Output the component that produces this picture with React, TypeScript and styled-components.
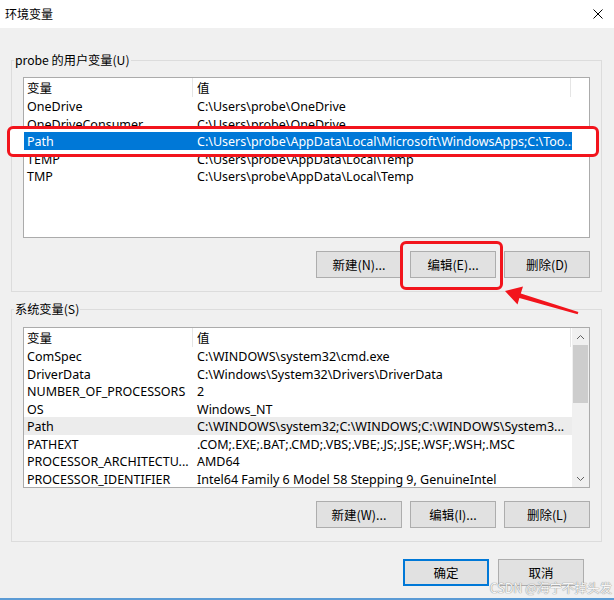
import React from "react";
import styled, { createGlobalStyle } from "styled-components";

const UI_FONT = `"Noto Sans", "Noto Sans CJK SC", sans-serif`;
const CJK_FONT = `"Noto Sans CJK SC", "Noto Sans", sans-serif`;

const GlobalStyle = createGlobalStyle`
  html, body { margin: 0; padding: 0; background: #f0f0f0; }
  body { width: 614px; height: 600px; overflow: hidden; font-family: ${UI_FONT}; }
`;

const Window = styled.div`
  position: relative;
  width: 614px;
  height: 600px;
  box-sizing: border-box;
  background: #f0f0f0;
  border-bottom: 2px solid #5b9bd5;
  display: flex;
  flex-direction: column;
  color: #000;
`;

const TitleBar = styled.div`
  height: 28px;
  flex: none;
  background: #ffffff;
  display: flex;
  align-items: center;
  justify-content: space-between;
  padding: 0 11px 0 5px;
`;

const Title = styled.span`
  font-family: ${CJK_FONT};
  font-size: 12px;
  line-height: 16px;
`;

const Main = styled.div`
  display: flex;
  flex-direction: column;
  padding: 24px 12px 0 11px;
`;

const Group = styled.fieldset<{ $gap?: number }>`
  margin: ${(p) => p.$gap ?? 0}px 0 0 0;
  padding: 0;
  min-width: 0;
  border: 1px solid #dcdcdc;
`;

const Legend = styled.legend`
  margin-left: 2px;
  padding: 0 1px;
  font-family: ${CJK_FONT};
  font-size: 12.2px;
  line-height: 16px;
`;

const GroupBody = styled.div<{ $top: number }>`
  display: flex;
  flex-direction: column;
  gap: 13px;
  padding: ${(p) => p.$top}px 11px 13px 11px;
`;

const ListView = styled.div`
  height: 161px;
  box-sizing: border-box;
  border: 1px solid #ababab;
  background: #ffffff;
  display: flex;
  overflow: hidden;
`;

const Table = styled.div`
  width: 548px;
  display: flex;
  flex-direction: column;
`;

const HeaderRow = styled.div`
  display: grid;
  grid-template-columns: 169px 378px;
  height: 19px;
  flex: none;
`;

const HeaderCell = styled.div<{ $first?: boolean }>`
  border-right: 1px solid #e5e5e5;
  padding: 1px 0 0 ${(p) => (p.$first ? 3 : 4)}px;
  font-family: ${CJK_FONT};
  font-size: 12.5px;
  line-height: 18px;
`;

type RowState = "normal" | "selected" | "inactive";

const Row = styled.div<{ $state: RowState }>`
  display: grid;
  grid-template-columns: 169px 1fr;
  height: 17.5px;
  flex: none;
  font-size: 12.5px;
  white-space: nowrap;
  position: ${(p) => (p.$state === "selected" ? "relative" : "static")};
  z-index: ${(p) => (p.$state === "selected" ? 2 : "auto")};
  background: ${(p) =>
    p.$state === "selected" ? "#0078d7" : p.$state === "inactive" ? "#ececec" : "transparent"};
  color: ${(p) => (p.$state === "selected" ? "#ffffff" : "#000000")};
`;

const Cell = styled.div<{ $first?: boolean }>`
  padding: 1px 0 0 ${(p) => (p.$first ? 3 : 4)}px;
  line-height: 17px;
  height: 17.5px;
  box-sizing: border-box;
`;

const ScrollBar = styled.div`
  width: 17px;
  flex: none;
  background: #f0f0f0;
  display: flex;
  flex-direction: column;
`;

const ScrollArrow = styled.div`
  height: 17px;
  flex: none;
  display: flex;
  align-items: center;
  justify-content: center;
`;

const Thumb = styled.div`
  height: 58px;
  width: 15px;
  margin-left: 1px;
  background: #cdcdcd;
  flex: none;
`;

const Track = styled.div`
  flex: 1;
`;

const ButtonRow = styled.div<{ $gap: number; $right?: number }>`
  display: flex;
  justify-content: flex-end;
  gap: ${(p) => p.$gap}px;
  padding-right: ${(p) => p.$right ?? 0}px;
`;

const Button = styled.button<{ $default?: boolean }>`
  width: 86px;
  height: 27px;
  margin: 0;
  padding: 0;
  box-sizing: border-box;
  background: #e1e1e1;
  border: 1px solid ${(p) => (p.$default ? "#0078d7" : "#adadad")};
  box-shadow: ${(p) => (p.$default ? "inset 0 0 0 1px #0078d7" : "none")};
  font-family: ${CJK_FONT};
  font-size: 12.5px;
  color: #000;
`;

const Footer = styled(ButtonRow)`
  margin-top: 17px;
`;

const HighlightBox = styled.div`
  position: absolute;
  left: 7px;
  top: 126px;
  width: 592px;
  height: 31px;
  box-sizing: border-box;
  border: 3.5px solid #f2141c;
  border-radius: 6px;
  background: #ffffff;
  z-index: 1;
`;

const ButtonMark = styled.div`
  position: absolute;
  left: 400px;
  top: 241px;
  width: 103px;
  height: 49px;
  box-sizing: border-box;
  border: 3px solid #f2141c;
  border-radius: 6px;
  z-index: 3;
`;

const ArrowSvg = styled.svg`
  position: absolute;
  left: 0;
  top: 0;
  z-index: 3;
  pointer-events: none;
`;

const Watermark = styled.div`
  position: absolute;
  right: 2px;
  bottom: 2px;
  font-family: ${CJK_FONT};
  font-size: 12.5px;
  line-height: 16px;
  color: #f6f6f6;
  text-shadow: 0 0 1px #8a8a8a, 0 0 1px #8a8a8a;
  z-index: 3;
`;

const Chevron = ({ up }: { up?: boolean }) => (
  <svg width="9" height="6" viewBox="0 0 9 6">
    <path
      d={up ? "M1 5 L4.5 1.5 L8 5" : "M1 1 L4.5 4.5 L8 1"}
      fill="none"
      stroke="#606060"
      strokeWidth="1"
    />
  </svg>
);

type Item = { name: string; value: string; state?: RowState };

const userVars: Item[] = [
  { name: "OneDrive", value: "C:\\Users\\probe\\OneDrive" },
  { name: "OneDriveConsumer", value: "C:\\Users\\probe\\OneDrive" },
  {
    name: "Path",
    value: "C:\\Users\\probe\\AppData\\Local\\Microsoft\\WindowsApps;C:\\Too...",
    state: "selected",
  },
  { name: "TEMP", value: "C:\\Users\\probe\\AppData\\Local\\Temp" },
  { name: "TMP", value: "C:\\Users\\probe\\AppData\\Local\\Temp" },
];

const sysVars: Item[] = [
  { name: "ComSpec", value: "C:\\WINDOWS\\system32\\cmd.exe" },
  { name: "DriverData", value: "C:\\Windows\\System32\\Drivers\\DriverData" },
  { name: "NUMBER_OF_PROCESSORS", value: "2" },
  { name: "OS", value: "Windows_NT" },
  {
    name: "Path",
    value: "C:\\WINDOWS\\system32;C:\\WINDOWS;C:\\WINDOWS\\System3...",
    state: "inactive",
  },
  { name: "PATHEXT", value: ".COM;.EXE;.BAT;.CMD;.VBS;.VBE;.JS;.JSE;.WSF;.WSH;.MSC" },
  { name: "PROCESSOR_ARCHITECTU...", value: "AMD64" },
  { name: "PROCESSOR_IDENTIFIER", value: "Intel64 Family 6 Model 58 Stepping 9, GenuineIntel" },
];

const VarList = ({ items, scroll }: { items: Item[]; scroll?: boolean }) => (
  <ListView>
    <Table>
      <HeaderRow>
        <HeaderCell $first>变量</HeaderCell>
        <HeaderCell>值</HeaderCell>
      </HeaderRow>
      {items.map((it) => (
        <Row key={it.name + it.value} $state={it.state ?? "normal"}>
          <Cell $first>{it.name}</Cell>
          <Cell>{it.value}</Cell>
        </Row>
      ))}
    </Table>
    {scroll && (
      <ScrollBar>
        <ScrollArrow>
          <Chevron up />
        </ScrollArrow>
        <Thumb />
        <Track />
        <ScrollArrow>
          <Chevron />
        </ScrollArrow>
      </ScrollBar>
    )}
  </ListView>
);

export default function App() {
  return (
    <>
      <GlobalStyle />
      <Window>
        <TitleBar>
          <Title>环境变量</Title>
          <svg width="10" height="10" viewBox="0 0 10 10">
            <path d="M0.5 0.5 L9.5 9.5 M9.5 0.5 L0.5 9.5" stroke="#000" strokeWidth="1" />
          </svg>
        </TitleBar>
        <Main>
          <Group>
            <Legend>probe 的用户变量(U)</Legend>
            <GroupBody $top={9}>
              <VarList items={userVars} />
              <ButtonRow $gap={8}>
                <Button>新建(N)...</Button>
                <Button>编辑(E)...</Button>
                <Button>删除(D)</Button>
              </ButtonRow>
            </GroupBody>
          </Group>
          <Group $gap={9}>
            <Legend>系统变量(S)</Legend>
            <GroupBody $top={10}>
              <VarList items={sysVars} scroll />
              <ButtonRow $gap={8}>
                <Button>新建(W)...</Button>
                <Button>编辑(I)...</Button>
                <Button>删除(L)</Button>
              </ButtonRow>
            </GroupBody>
          </Group>
          <Footer $gap={9} $right={18}>
            <Button $default>确定</Button>
            <Button>取消</Button>
          </Footer>
        </Main>
        <HighlightBox />
        <ButtonMark />
        <ArrowSvg width="614" height="600" viewBox="0 0 614 600">
          <polygon
            points="505,291 523,286.5 520.8,293.4 578.4,312 577.6,314.2 519.4,298 517.5,304.5"
            fill="#f2141c"
          />
        </ArrowSvg>
        <Watermark>CSDN @海宁不掉头发</Watermark>
      </Window>
    </>
  );
}
